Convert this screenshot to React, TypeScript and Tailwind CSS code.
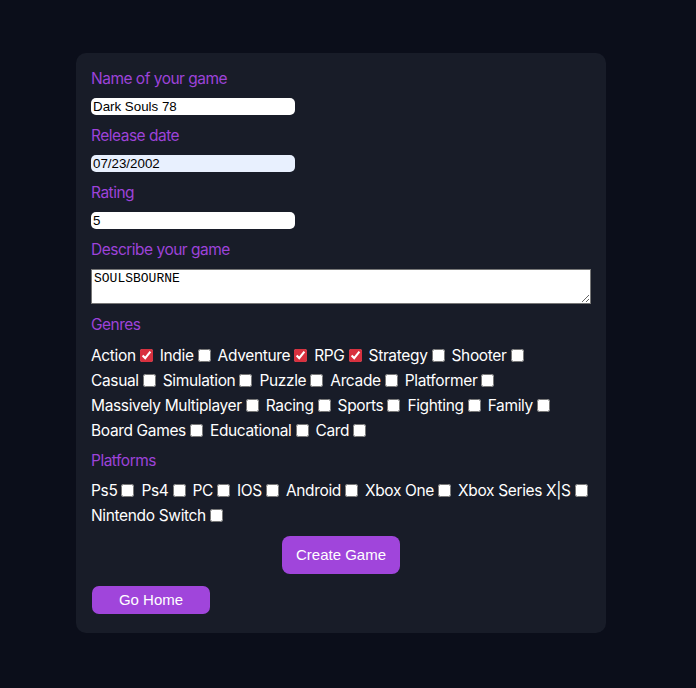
import { useState } from "react";

const GENRE_ROWS = [
  ["Action", "Indie", "Adventure", "RPG", "Strategy", "Shooter"],
  ["Casual", "Simulation", "Puzzle", "Arcade", "Platformer"],
  ["Massively Multiplayer", "Racing", "Sports", "Fighting", "Family"],
  ["Board Games", "Educational", "Card"],
];

const PLATFORM_ROWS = [
  ["Ps5", "Ps4", "PC", "IOS", "Android", "Xbox One", "Xbox Series X|S"],
  ["Nintendo Switch"],
];

const labelCls = "block text-[15.5px] tracking-[-0.5px] leading-[26px] text-[#9d43d9]";
const inputCls =
  "block w-[204px] h-[17px] px-[2px] rounded-[5px] text-black text-[13.33px] tracking-normal font-['Liberation_Sans',Arial,sans-serif] outline-none mb-[8px]";

const CheckGroup = ({
  rows,
  checked,
  onToggle,
}: {
  rows: string[][];
  checked: string[];
  onToggle: (item: string) => void;
}) => (
  <div className="text-[15.5px] tracking-[-0.35px] text-white">
    {rows.map((row, i) => (
      <div key={i} className="flex items-center h-[25px] gap-x-[4px] whitespace-nowrap">
        {row.map((item) => (
          <label key={item} className="flex items-center leading-[25px]">
            <span>{item}</span>
            <input
              type="checkbox"
              checked={checked.includes(item)}
              onChange={() => onToggle(item)}
              className="appearance-auto w-[13px] h-[13px] ml-[4px] mr-[3px] m-0 accent-[#d8313f]"
            />
          </label>
        ))}
      </div>
    ))}
  </div>
);

const App = () => {
  const [name, setName] = useState("Dark Souls 78");
  const [date, setDate] = useState("07/23/2002");
  const [rating, setRating] = useState("5");
  const [description, setDescription] = useState("SOULSBOURNE");
  const [genres, setGenres] = useState<string[]>(["Action", "Adventure", "RPG"]);
  const [platforms, setPlatforms] = useState<string[]>([]);

  const toggle = (list: string[], set: (v: string[]) => void) => (item: string) =>
    set(list.includes(item) ? list.filter((i) => i !== item) : [...list, item]);

  return (
    <div className="min-h-screen bg-[#0b0e1a] font-['Inter',sans-serif] pt-[53px] pb-[55px]">
      <form
        onSubmit={(e) => e.preventDefault()}
        className="w-[530px] ml-[76px] bg-[#181c28] rounded-[10px] pt-[13px] pb-[19px] px-[15px]"
      >
        <label className={`${labelCls} mb-[6px]`}>Name of your game</label>
        <input className={`${inputCls} bg-white`} value={name} onChange={(e) => setName(e.target.value)} />

        <label className={`${labelCls} mb-[6px]`}>Release date</label>
        <input className={`${inputCls} bg-[#e8f0fe]`} value={date} onChange={(e) => setDate(e.target.value)} />

        <label className={`${labelCls} mb-[6px]`}>Rating</label>
        <input className={`${inputCls} bg-white`} value={rating} onChange={(e) => setRating(e.target.value)} />

        <label className={`${labelCls} mb-[6px]`}>Describe your game</label>
        <textarea
          value={description}
          onChange={(e) => setDescription(e.target.value)}
          className="block w-[500px] h-[35px] px-[2px] py-[1px] border border-[#767676] bg-white text-black text-[13px] leading-[15px] font-['Liberation_Mono','Courier_New',monospace] resize mb-[8px] outline-none"
        />

        <label className={`${labelCls} mb-[5px]`}>Genres</label>
        <CheckGroup rows={GENRE_ROWS} checked={genres} onToggle={toggle(genres, setGenres)} />

        <label className={`${labelCls} mt-[5px] mb-[4px]`}>Platforms</label>
        <CheckGroup rows={PLATFORM_ROWS} checked={platforms} onToggle={toggle(platforms, setPlatforms)} />

        <div className="flex justify-center mt-[8px]">
          <button
            type="submit"
            className="w-[118px] h-[38px] rounded-[8px] bg-[#a045db] text-white text-[15px] font-['Liberation_Sans',Arial,sans-serif]"
          >
            Create Game
          </button>
        </div>

        <button
          type="button"
          className="block mt-[12px] ml-[1px] w-[118px] h-[28px] rounded-[7px] bg-[#a045db] text-white text-[15px] font-['Liberation_Sans',Arial,sans-serif]"
        >
          Go Home
        </button>
      </form>
    </div>
  );
};

export default App;
